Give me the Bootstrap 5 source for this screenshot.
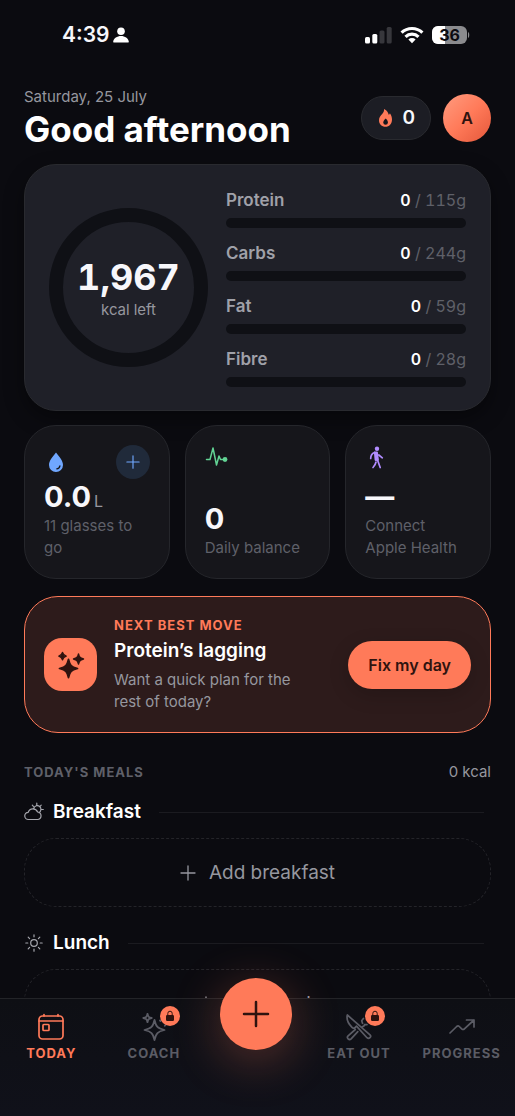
<!DOCTYPE html>
<html lang="en" data-bs-theme="dark">
<head>
<meta charset="utf-8">
<meta name="viewport" content="width=device-width, initial-scale=1">
<title>Today</title>
<link rel="stylesheet" href="https://cdn.jsdelivr.net/npm/bootstrap@5.3.0/dist/css/bootstrap.min.css">
<style>
  :root {
    --ink: #0b0b10; --coral: #ff7a59; --cocoa: #2f130f;
    --panel: #1f2028; --tile: #16161b; --edge: #292a2f;
    --bright: #f7f7fb; --soft: #96979f; --faint: #5f6069;
  }
  body { font-family: Inter, "Liberation Sans", sans-serif; font-size: 15px; line-height: 22px; background: var(--ink); color: var(--bright); }
  svg { display: block; flex: none; }
  a { color: inherit; text-decoration: none; }
  .soft { color: var(--soft); }
  .faint { color: var(--faint); }

  .status-bar { height: 70px; padding: 0 45px 0 62px; }
  .clock { font-size: 21px; font-weight: 600; }
  .scroller { min-height: 0; overflow-y: auto; scrollbar-width: none; padding: 16px 24px 24px; }
  .scroller::-webkit-scrollbar { display: none; }

  .greeting { font-size: 35px; line-height: 42px; font-weight: 700; }
  .streak { height: 44px; padding: 0 15px; background: #1c1d24; border: 1px solid var(--edge); font-size: 19px; font-weight: 600; color: var(--bright); }
  .avatar { width: 48px; height: 48px; background: linear-gradient(135deg, #ff9c80, #ff7a59 50%, #e4573a); color: var(--cocoa); font-size: 16px; font-weight: 600; }

  .summary { margin-top: 14px; padding: 23px 24px; gap: 18px; background: var(--panel); border: 1px solid var(--edge); border-radius: 32px; box-shadow: 0 8px 20px rgba(0,0,0,.4); font-variant-numeric: tabular-nums; }
  .ring { width: 159px; height: 159px; border: 14px solid #0f1015; border-radius: 50%; }
  .ring-value { font-size: 36px; line-height: 44px; font-weight: 700; }
  .macro-list { gap: 13px; }
  .macro-name { font-size: 17px; line-height: 24px; font-weight: 600; color: #a0a1a9; }
  .macro-name b { font-weight: 600; color: #fff; }
  .macro-name span { font-size: 16px; font-weight: 400; color: var(--faint); }
  .track { height: 10px; margin-top: 6px; background: #0f1015; border-radius: 5px; }

  .tiles { margin-top: 14px; gap: 15px; }
  .tile { flex: 1 1 0; min-width: 0; padding: 19px; background: var(--tile); border: 1px solid #25262b; border-radius: 32px; }
  .tile-value { font-size: 29px; line-height: 36px; font-weight: 700; }
  .tile-value small { margin-left: 3px; font-size: 16px; line-height: 16px; font-weight: 400; color: var(--soft); }
  .add-water { width: 34px; height: 34px; background: #202a3a; }
  .tile-icon { height: 24px; }

  .nudge { margin-top: 17px; padding: 19px; gap: 17px; background: #2d1b1b; border: 1px solid var(--coral); border-radius: 34px; }
  .nudge-icon { width: 53px; height: 53px; border-radius: 18px; background: var(--coral); }
  .eyebrow { font-size: 13px; line-height: 18px; font-weight: 700; letter-spacing: 1px; }
  .nudge .eyebrow { color: var(--coral); }
  .nudge-title { font-size: 19px; line-height: 28px; font-weight: 600; margin: 3px 0 4px; }
  .fix-button { height: 48px; padding: 0 20px; background: var(--coral); color: var(--cocoa); font-size: 16px; font-weight: 600; white-space: nowrap; box-shadow: 0 6px 20px rgba(0,0,0,.18); }

  .meals-head { margin-top: 28px; }
  .meal-title { font-size: 19px; line-height: 28px; font-weight: 600; }
  .meal-head { gap: 9px; margin-top: 15px; }
  .meal-head.later { margin-top: 22px; }
  .rule { height: 1px; margin: 0 7px 0 9px; background: #1b1b20; }
  .add-meal { height: 69px; margin-top: 12px; gap: 13px; border: 1px dashed #242429; border-radius: 32px; background: none; color: var(--soft); font-size: 19px; }

  .tab-bar { position: relative; z-index: 2; height: 118px; padding: 14px 2px 0 0; background: linear-gradient(#0e0f14, #10111a); border-top: 1px solid #232428; }
  .tab { flex: 1 1 0; color: #5b5c65; gap: 3px; }
  .tab.on { color: var(--coral); }
  .tab-art { position: relative; }
  .lock { position: absolute; top: -7px; left: 20px; width: 20px; height: 20px; background: var(--coral); }
  .fab-cell { flex: 1 1 0; position: relative; }
  .fab { position: absolute; top: -35px; left: 50%; margin-left: -36px; width: 72px; height: 72px; background: var(--coral); box-shadow: 0 10px 50px rgba(255,122,89,.32); }
</style>
</head>
<body>
<svg class="d-none" aria-hidden="true">
  <symbol id="plus" viewBox="0 0 16 16"><path d="M8 1v14M1 8h14" fill="none" stroke="currentColor" stroke-width="1.300" stroke-linecap="round"/></symbol>
  <symbol id="padlock" viewBox="0 0 12 12"><path d="M3.800 5.500V3.400a2.200 2.200 0 0 1 4.400 0v2.100" fill="none" stroke="#2f130f"/><rect x="2" y="5" width="8" height="6" rx="1.200" fill="#2f130f"/></symbol>
</svg>

<div class="vh-100 d-flex flex-column overflow-hidden">
  <div class="status-bar d-flex align-items-center justify-content-between flex-shrink-0">
    <div class="d-flex align-items-center gap-1">
      <span class="clock">4:39</span>
      <svg width="16" height="16" viewBox="0 0 16 16" fill="#fff"><circle cx="8" cy="4.3" r="3.8"/><path d="M1 15.5c-.6 0-.9-.5-.8-1C.8 11.3 4 9 8 9s7.200 2.300 7.800 5.500c.1.500-.2 1-.8 1z"/></svg>
    </div>
    <div class="d-flex align-items-center gap-2">
      <svg width="27" height="18" viewBox="0 0 27 18"><rect y="11" width="5" height="6.500" rx="1.500" fill="#fff"/><rect x="7.300" y="8" width="5" height="9.500" rx="1.500" fill="#fff"/><rect x="14.500" y="4.500" width="5" height="13" rx="1.500" fill="#37373c"/><rect x="21.700" y="1" width="5" height="16.500" rx="1.500" fill="#37373c"/></svg>
      <svg width="24" height="18" viewBox="0 0 24 18"><g fill="none" stroke="#fff" stroke-width="3.200"><path d="M1.600 6.700a15 15 0 0 1 20.800 0"/><path d="M5.500 10.800a9.400 9.400 0 0 1 13 0"/></g><path d="M8.400 13.500a5.300 5.300 0 0 1 7.200 0L12 17.300z" fill="#fff"/></svg>
      <svg width="38" height="18" viewBox="0 0 38 18" font-family="Inter, sans-serif"><clipPath id="cell"><rect width="35" height="18" rx="6"/></clipPath><g clip-path="url(#cell)"><path fill="#8b8b8e" d="M0 0h35v18H0z"/><path fill="#fff" d="M0 0h13v18H0z"/></g><path d="M36 6c1.700.6 1.700 5.400 0 6z" fill="#8b8b8e"/><text x="17.500" y="14.500" font-size="16" font-weight="700" text-anchor="middle" fill="#0b0b10">36</text></svg>
    </div>
  </div>

  <main class="scroller flex-grow-1">
    <header class="d-flex align-items-center justify-content-between">
      <div>
        <div class="soft">Saturday, 25 July</div>
        <h1 class="greeting m-0">Good afternoon</h1>
      </div>
      <div class="d-flex align-items-center gap-2">
        <button type="button" class="streak rounded-pill d-flex align-items-center gap-2 me-1">
          <svg width="17" height="20" viewBox="0 0 17 20"><path d="M7 1c3.400 1.600 4.200 4 4.700 5.800.7-.3 1-.9 1.200-1.600 1.400 2.100 2.100 4.100 2.100 6.300 0 4.400-2.800 7.300-6.500 7.300S2 16.200 2 12.300c0-3.100 1.600-4.800 3.200-6.400C6.600 4.500 7.200 3 7 1z" fill="#ff7a59"/><path d="M8.700 10.500c1.500 1.600 2.200 2.600 2.200 4a2.300 2.300 0 0 1-4.600 0c0-1.400.9-2.400 2.400-4z" fill="#17171d"/></svg>
          <span>0</span>
        </button>
        <button type="button" class="avatar btn border-0 p-0 rounded-circle" aria-label="Account">A</button>
      </div>
    </header>

    <section class="summary d-flex align-items-center">
      <div class="ring flex-shrink-0 d-flex flex-column align-items-center justify-content-center">
        <div class="ring-value">1,967</div>
        <div class="soft">kcal left</div>
      </div>
      <div class="macro-list flex-grow-1 d-flex flex-column">
        <div><div class="macro-name d-flex justify-content-between">Protein <span><b>0</b> / 115g</span></div><div class="track"></div></div>
        <div><div class="macro-name d-flex justify-content-between">Carbs <span><b>0</b> / 244g</span></div><div class="track"></div></div>
        <div><div class="macro-name d-flex justify-content-between">Fat <span><b>0</b> / 59g</span></div><div class="track"></div></div>
        <div><div class="macro-name d-flex justify-content-between">Fibre <span><b>0</b> / 28g</span></div><div class="track"></div></div>
      </div>
    </section>

    <section class="tiles d-flex">
      <div class="tile d-flex flex-column">
        <div class="d-flex justify-content-between align-items-center">
          <svg width="24" height="24" viewBox="0 0 24 24"><path d="M12 2.500c3 4 7 8 7 12.500a7 7 0 0 1-14 0C5 10.500 9 6.500 12 2.500z" fill="#70a7ff"/><path d="M12.800 18.800c1.800-.2 2.800-1.300 3.100-3" fill="none" stroke="#16161b" stroke-width="1.300" stroke-linecap="round"/></svg>
          <button type="button" class="add-water btn border-0 p-0 rounded-circle d-flex align-items-center justify-content-center" aria-label="Add a glass"><svg width="14" height="14" color="#70a7ff"><use href="#plus"/></svg></button>
        </div>
        <div class="tile-value mt-auto">0.0<small>L</small></div>
        <div class="faint">11 glasses to go</div>
      </div>
      <div class="tile d-flex flex-column">
        <svg class="tile-icon" width="24" height="24" viewBox="0 0 24 24"><path d="M1.500 14.500H5L8 3l3.500 17L14 11l1.500 3.500H19" fill="none" stroke="#62d394" stroke-width="1.500" stroke-linejoin="round" stroke-linecap="round"/><circle cx="20" cy="14.500" r="2.400" fill="#62d394"/></svg>
        <div class="tile-value mt-auto">0</div>
        <div class="faint">Daily balance</div>
      </div>
      <a href="#" class="tile d-flex flex-column">
        <svg class="tile-icon" width="24" height="24" viewBox="0 0 24 24" fill="none" stroke="#b18cff" stroke-linecap="round" stroke-linejoin="round"><circle cx="12" cy="3.700" r="2.200" fill="#b18cff" stroke="none"/><path d="M9.800 7.300H12l1 7.500-2.500.2z" fill="#b18cff" stroke-width="1.800"/><path d="M9.500 7.500C7 8.500 5.700 10 5.700 13.500M13.800 10l3.500 2.800M11 17c-.5 2.500-1.500 4-3 5.500M12.300 14.500l2.900 8" stroke-width="1.700"/></svg>
        <div class="tile-value mt-auto">—</div>
        <div class="faint">Connect<br>Apple Health</div>
      </a>
    </section>

    <section class="nudge d-flex align-items-center">
      <div class="nudge-icon flex-shrink-0 d-flex align-items-center justify-content-center">
        <svg width="28" height="28" viewBox="0 0 28 28" fill="#2f130f" stroke="#2f130f" stroke-linejoin="round"><path d="M11.500 8.500c1.400 6 2.500 7.200 9 9-6.500 1.800-7.600 3-9 9-1.400-6-2.500-7.200-9-9 6.500-1.800 7.600-3 9-9z" stroke-width="1.800"/><path d="M21.500 3c.8 3.300 1.500 4 5 5-3.500 1-4.200 1.700-5 5-.8-3.300-1.500-4-5-5 3.500-1 4.200-1.700 5-5zM5.500 1.500c.6 2.300 1.200 3 3.700 3.700-2.500.7-3.100 1.400-3.700 3.700C4.900 6.600 4.300 5.900 1.800 5.200 4.300 4.500 4.900 3.800 5.500 1.500z" stroke-width="1.400"/></svg>
      </div>
      <div class="flex-grow-1">
        <div class="eyebrow text-uppercase">Next best move</div>
        <h2 class="nudge-title">Protein’s lagging</h2>
        <div class="soft">Want a quick plan for the rest of today?</div>
      </div>
      <button type="button" class="fix-button btn border-0 rounded-pill flex-shrink-0 ms-3">Fix my day</button>
    </section>

    <div class="meals-head d-flex justify-content-between align-items-center">
      <h2 class="eyebrow faint text-uppercase m-0">Today's meals</h2>
      <span class="soft">0 kcal</span>
    </div>

    <div class="meal-head d-flex align-items-center">
      <svg width="20" height="20" viewBox="0 0 20 20" fill="none" stroke="#a6a7ae" stroke-width="1.200" stroke-linecap="round" stroke-linejoin="round"><path d="M4.500 17.500a3.600 3.600 0 0 1-.3-7.200 5 5 0 0 1 9.400-.3 3.800 3.800 0 0 1 .4 7.500zM9.800 6a3.700 3.700 0 1 1 5.200 4.600M12.800 1.200v1.600M8.300 3.200l1.100 1.100M17.200 3.200l-1.100 1.100M17.800 7.500h1.500"/></svg>
      <h3 class="meal-title m-0">Breakfast</h3>
      <div class="rule flex-grow-1"></div>
    </div>
    <button type="button" class="add-meal w-100 d-flex align-items-center justify-content-center"><svg width="16" height="16"><use href="#plus"/></svg>Add breakfast</button>

    <div class="meal-head later d-flex align-items-center">
      <svg width="20" height="20" viewBox="0 0 20 20" fill="none" stroke="#a6a7ae" stroke-width="1.200" stroke-linecap="round"><circle cx="10" cy="10" r="3.300"/><path d="M10 1.800v2M10 16.200v2M1.800 10h2M16.200 10h2M4.200 4.200l1.400 1.400M14.400 14.400l1.400 1.400M4.200 15.800l1.400-1.400M14.400 5.600l1.400-1.400"/></svg>
      <h3 class="meal-title m-0">Lunch</h3>
      <div class="rule flex-grow-1"></div>
    </div>
    <button type="button" class="add-meal w-100 d-flex align-items-center justify-content-center"><svg width="16" height="16"><use href="#plus"/></svg>Add lunch</button>
  </main>

  <nav class="tab-bar d-flex flex-shrink-0">
    <a href="#" class="tab on d-flex flex-column align-items-center">
      <svg width="28" height="28" viewBox="0 0 28 28" fill="none" stroke="currentColor" stroke-width="1.700" stroke-linecap="round" stroke-linejoin="round"><rect x="2" y="3" width="24" height="23" rx="3.500"/><path d="M2 8h24M7 1.500V3M21 1.500V3"/><rect x="6" y="11.500" width="6" height="6" rx=".8"/></svg>
      <span class="eyebrow">TODAY</span>
    </a>
    <a href="#" class="tab d-flex flex-column align-items-center">
      <div class="tab-art">
        <svg width="28" height="28" viewBox="0 0 28 28" fill="none" stroke="currentColor" stroke-width="1.800" stroke-linejoin="round" stroke-linecap="round"><path d="M14.500 7c1.600 7 3 8.200 10 10-7 1.800-8.400 3-10 10-1.600-7-3-8.200-10-10 7-1.800 8.400-3 10-10z"/><path d="M7.500.8c.7 3 1.200 3.500 4.200 4.200-3 .7-3.500 1.200-4.200 4.200C6.800 6.200 6.300 5.700 3.300 5 6.300 4.300 6.800 3.800 7.500.8zM20 7.500l.5.600M24.800 12.800l.4-.6"/></svg>
        <span class="lock rounded-circle d-flex align-items-center justify-content-center"><svg width="12" height="12"><use href="#padlock"/></svg></span>
      </div>
      <span class="eyebrow">COACH</span>
    </a>
    <div class="fab-cell">
      <button type="button" class="fab btn border-0 p-0 rounded-circle d-flex align-items-center justify-content-center" aria-label="Log food"><svg width="28" height="28" viewBox="0 0 28 28"><path d="M14 2v24M2 14h24" stroke="#2f130f" stroke-width="2.500" stroke-linecap="round"/></svg></button>
    </div>
    <a href="#" class="tab d-flex flex-column align-items-center">
      <div class="tab-art">
        <svg width="28" height="28" viewBox="0 0 28 28" fill="none" stroke="currentColor" stroke-width="1.700" stroke-linecap="round" stroke-linejoin="round"><path d="M2.300 2c-1 4.500.8 8.500 4.700 12.300 1 1 2 1.300 3 .3l1.500-1.500L22 24.700c2 1.900 4.900-.9 3-2.900zM10.300 16.500l-7.200 6.300c-2 2 1 5 3 3l6.700-7.200M17.500 10.300l-.8-2.600 1.700-2.200M19.500 11.500l2.500.2M19.500 12.500l-2 1.300"/></svg>
        <span class="lock rounded-circle d-flex align-items-center justify-content-center"><svg width="12" height="12"><use href="#padlock"/></svg></span>
      </div>
      <span class="eyebrow">EAT OUT</span>
    </a>
    <a href="#" class="tab d-flex flex-column align-items-center">
      <svg width="28" height="28" viewBox="0 0 28 28" fill="none" stroke="currentColor" stroke-width="1.700" stroke-linecap="round" stroke-linejoin="round"><path d="M2 20l6.700-6.500c1-.9 1.700-.9 2.600 0l2.400 2.300c1 .9 1.800.9 2.700 0L26 7M18.500 7H26v7"/></svg>
      <span class="eyebrow">PROGRESS</span>
    </a>
  </nav>
</div>
<script src="https://cdn.jsdelivr.net/npm/bootstrap@5.3.0/dist/js/bootstrap.bundle.min.js"></script>
</body>
</html>
